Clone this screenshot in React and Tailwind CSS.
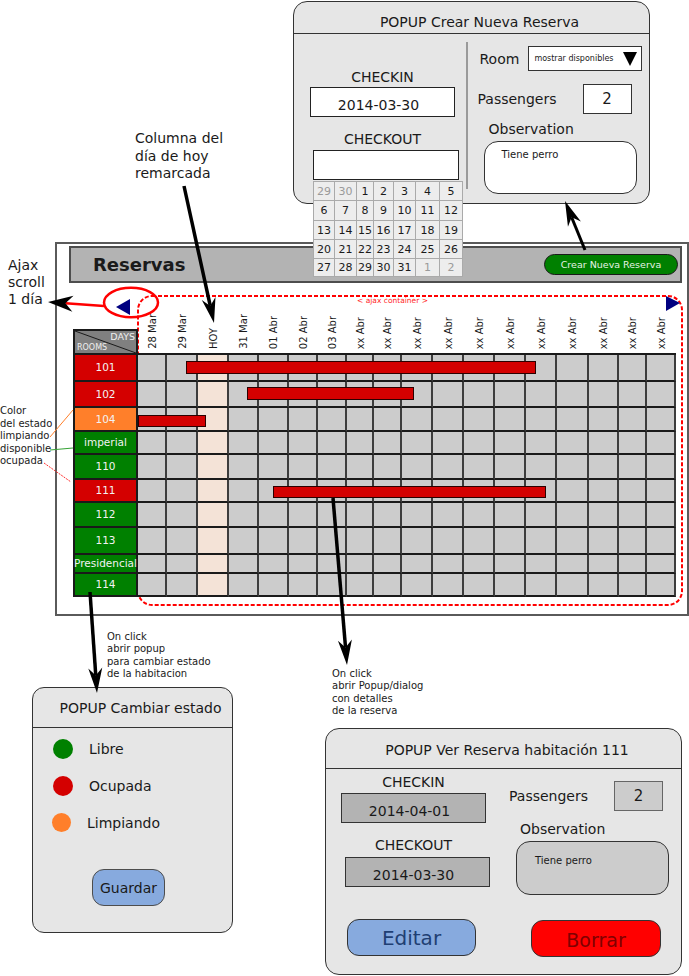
import React from 'react';

const DAYS = ['28 Mar', '29 Mar', 'HOY', '31 Mar', '01 Abr', '02 Abr', '03 Abr', 'xx Abr', 'xx Abr', 'xx Abr', 'xx Abr', 'xx Abr', 'xx Abr', 'xx Abr', 'xx Abr', 'xx Abr', 'xx Abr', 'xx Abr'];

const ROOMS = [
    { name: '101', bg: 'bg-[#d40000]' },
    { name: '102', bg: 'bg-[#d40000]' },
    { name: '104', bg: 'bg-[#ff7f2a]' },
    { name: 'imperial', bg: 'bg-[#008000]' },
    { name: '110', bg: 'bg-[#008000]' },
    { name: '111', bg: 'bg-[#d40000]' },
    { name: '112', bg: 'bg-[#008000]' },
    { name: '113', bg: 'bg-[#008000]' },
    { name: 'Presidencial', bg: 'bg-[#008000]' },
    { name: '114', bg: 'bg-[#008000]' },
];

// Calendar of the checkout picker, [day, greyed out]
const WEEKS = [
    [[29, 1], [30, 1], [1], [2], [3], [4], [5]],
    [[6], [7], [8], [9], [10], [11], [12]],
    [[13], [14], [15], [16], [17], [18], [19]],
    [[20], [21], [22], [23], [24], [25], [26]],
    [[27], [28], [29], [30], [31], [1, 1], [2, 1]],
];

function Arrow({ x1, y1, x2, y2, color = '#000', head = '#000', w = 3.5, L = 25, W = 7 }) {
    const dx = x2 - x1;
    const dy = y2 - y1;
    const len = Math.hypot(dx, dy);
    const ux = dx / len;
    const uy = dy / len;
    const nx = -uy;
    const ny = ux;
    const bx = x2 - L * ux;
    const by = y2 - L * uy;
    const mx = x2 - 0.7 * L * ux;
    const my = y2 - 0.7 * L * uy;
    const pts = `${x2},${y2} ${bx + W * nx},${by + W * ny} ${mx},${my} ${bx - W * nx},${by - W * ny}`;
    return (
        <g>
            <line x1={x1} y1={y1} x2={mx} y2={my} stroke={color} strokeWidth={w} />
            <polygon points={pts} fill={head} />
        </g>
    );
}

function Triangle() {
    return (
        <svg width="14" height="14" viewBox="0 0 14 14">
            <polygon points="0,0 14,0 7,14" fill="#000" />
        </svg>
    );
}

export default function App() {
    return (
        <div className="relative w-[689px] h-[976px] overflow-hidden bg-white font-['DejaVu_Sans',sans-serif] text-[#1a1a1a]">
            {/* Annotations */}
            <div className="absolute left-[8px] top-[257px] text-[14px] leading-[17px]">
                <p>Ajax</p>
                <p>scroll</p>
                <p>1 día</p>
            </div>
            <div className="absolute left-[135px] top-[130px] text-[14px] leading-[17.5px]">
                <p>Columna del</p>
                <p>día de hoy</p>
                <p>remarcada</p>
            </div>
            <div className="absolute left-0 top-[405px] text-[10px] leading-[12.5px]">
                <p>Color</p>
                <p>del estado</p>
                <p>limpiando</p>
                <p>disponible</p>
                <p>ocupada</p>
            </div>
            <div className="absolute left-[107px] top-[631px] text-[10px] leading-[12.4px]">
                <p>On click</p>
                <p>abrir popup</p>
                <p>para cambiar estado</p>
                <p>de la habitacion</p>
            </div>
            <div className="absolute left-[332px] top-[668px] text-[10px] leading-[12.4px]">
                <p>On click</p>
                <p>abrir Popup/dialog</p>
                <p>con detalles</p>
                <p>de la reserva</p>
            </div>

            {/* Main page frame */}
            <div className="absolute left-[55px] top-[242px] w-[634px] h-[374px] border-2 border-[#5a5a5a] bg-white">
                <svg className="absolute left-[80px] top-[51px]" width="546" height="312">
                    <rect x="1" y="1" width="544" height="309" rx="14" fill="none" stroke="#ff0000" strokeWidth="2" strokeDasharray="4 2" />
                </svg>
                <span className="absolute left-[300px] top-[53px] text-[7.5px] leading-none text-[#ff2a2a]">&lt; ajax container &gt;</span>

                <div className="relative ml-[12px] mt-[2px] w-[613px] h-[37px] bg-[#b3b3b3] border-2 border-[#4d4d4d] flex items-center justify-between pl-[22px] pr-[2px]">
                    <span className="text-[18px] font-bold leading-none">Reservas</span>
                    <button className="w-[134px] h-[21px] rounded-full bg-[#008000] border border-[#1a1a1a] text-[9.5px] text-[#e6f2e6] leading-none">
                        Crear Nueva Reserva
                    </button>
                </div>

                <div className="relative ml-[16px] mt-[22px] w-[605px] grid grid-cols-[65px_29px_31px_31px_30px_30px_29px_29px_27px_28px_31px_31px_31px_31px_31px_32px_30px_28px_29px] grid-rows-[50px_27px_26px_24px_23px_25px_23px_25px_27px_19px_23px]">
                    <div className="self-end relative h-[26px] bg-[#808080] border-2 border-[#1a1a1a]">
                        <svg className="absolute inset-0 w-full h-full" viewBox="0 0 100 100" preserveAspectRatio="none">
                            <line x1="0" y1="0" x2="100" y2="100" stroke="#1a1a1a" strokeWidth="1" vectorEffect="non-scaling-stroke" />
                        </svg>
                        <span className="absolute top-[1px] right-[1px] text-[9.5px] leading-none text-[#eeeeee]">DAYS</span>
                        <span className="absolute bottom-[1px] left-[2px] text-[8px] leading-none text-[#eeeeee]">ROOMS</span>
                    </div>
                    {DAYS.map((d, i) => (
                        <div key={i} className="flex items-end justify-center pb-[4px] border-b-2 border-[#1a1a1a]">
                            <span className="[writing-mode:vertical-rl] rotate-180 text-[10px] leading-none whitespace-nowrap">{d}</span>
                        </div>
                    ))}
                    {ROOMS.map((room) => (
                        <React.Fragment key={room.name}>
                            <div className={`${room.bg} flex items-center justify-center border-l-2 border-r-2 border-b-2 border-[#1a1a1a] text-[10.5px] leading-none text-[#f2f2f2]`}>
                                {room.name}
                            </div>
                            {DAYS.map((d, i) => (
                                <div
                                    key={i}
                                    className={`${i === 2 ? 'bg-[#f4e3d7]' : 'bg-[#cccccc]'} border-r-2 border-b-2 border-r-[#3c3c3c] border-b-[#1a1a1a]`}
                                />
                            ))}
                        </React.Fragment>
                    ))}

                    {/* Reservations */}
                    <div className="absolute left-[113px] top-[56px] w-[350px] h-[13px] bg-[#d40000] border border-[#2b0000]" />
                    <div className="absolute left-[174px] top-[82px] w-[167px] h-[13px] bg-[#d40000] border border-[#2b0000]" />
                    <div className="absolute left-[65px] top-[110px] w-[68px] h-[12px] bg-[#d40000] border border-[#2b0000]" />
                    <div className="absolute left-[200px] top-[181px] w-[273px] h-[12px] bg-[#d40000] border border-[#2b0000]" />
                </div>
            </div>

            {/* POPUP Crear Nueva Reserva */}
            <div className="absolute left-[293px] top-[1px] w-[357px] h-[203px] rounded-[14px] border-[1.5px] border-[#333] bg-[#e6e6e6] overflow-hidden">
                <div className="h-[32px] border-b-[1.5px] border-[#333] flex justify-center pt-[12px] pl-[16px] text-[14px] leading-[16px]">
                    POPUP Crear Nueva Reserva
                </div>
                <div className="flex">
                    <div className="w-[172px] pl-[16px] pt-[35px] flex flex-col items-start">
                        <div className="w-[145px] text-center text-[14px] leading-[16px]">CHECKIN</div>
                        <div className="mt-[2px] w-[145px] h-[30px] border-[1.5px] border-[#222] bg-white flex justify-center pt-[9px] pr-[8px] text-[14px] leading-[16px]">
                            2014-03-30
                        </div>
                        <div className="mt-[14px] w-[145px] text-center text-[14px] leading-[16px]">CHECKOUT</div>
                        <div className="mt-[3px] ml-[3px] w-[146px] h-[30px] border-[1.5px] border-[#222] bg-white" />
                    </div>
                    <div className="mt-[8px] w-[1.5px] h-[147px] bg-[#9a9a9a]" />
                    <div className="pl-[11px] flex flex-col">
                        <div className="mt-[12px] h-[25px] flex items-center">
                            <span className="text-[14px] leading-[16px] ml-[1px]">Room</span>
                            <div className="ml-[9px] w-[114px] h-[25px] border-[1.5px] border-[#333] bg-white flex items-center justify-between pl-[5px] pr-[4px]">
                                <span className="text-[8px] leading-none">mostrar disponibles</span>
                                <Triangle />
                            </div>
                        </div>
                        <div className="mt-[13px] h-[30px] flex items-center">
                            <span className="text-[14px] leading-[16px] -ml-[1px]">Passengers</span>
                            <div className="ml-[26px] w-[49px] h-[30px] border-[1.5px] border-[#333] bg-white flex items-center justify-center text-[15px] leading-none">
                                2
                            </div>
                        </div>
                        <span className="mt-[7px] ml-[10px] text-[14px] leading-[16px]">Observation</span>
                        <div className="mt-[4px] ml-[5px] w-[153px] h-[53px] rounded-[14px] border-[1.5px] border-[#333] bg-white pl-[17px] pt-[7px] text-[10px] leading-[12px]">
                            Tiene perro
                        </div>
                    </div>
                </div>
            </div>

            {/* Date picker */}
            <div className="absolute left-[313px] top-[181px] grid grid-cols-[21px_22px_17px_20px_22px_24px_23px] grid-rows-[19px_20px_19px_19px_18px] bg-[#ededed] border-l border-t border-[#aaaaaa]">
                {WEEKS.flat().map(([day, grey], i) => (
                    <div
                        key={i}
                        className={`flex items-center justify-center border-r border-b border-[#aaaaaa] text-[11px] leading-none ${grey ? 'text-[#9a9a9a]' : 'text-[#1a1a1a]'}`}
                    >
                        {day}
                    </div>
                ))}
            </div>

            {/* POPUP Cambiar estado */}
            <div className="absolute left-[32px] top-[687px] w-[201px] h-[246px] rounded-[12px] border-[1.5px] border-[#333] bg-[#e6e6e6] overflow-hidden">
                <div className="h-[40px] border-b-[1.5px] border-[#333] flex justify-center pt-[12px] pl-[16px] text-[14px] leading-[16px]">
                    POPUP Cambiar estado
                </div>
                <div className="pl-[20px] pt-[11px] flex flex-col gap-[17px]">
                    <div className="flex items-center gap-[16px]">
                        <span className="w-[20px] h-[20px] rounded-full bg-[#008000]" />
                        <span className="text-[14px] leading-[16px]">Libre</span>
                    </div>
                    <div className="flex items-center gap-[16px]">
                        <span className="w-[20px] h-[20px] rounded-full bg-[#d40000]" />
                        <span className="text-[14px] leading-[16px]">Ocupada</span>
                    </div>
                    <div className="flex items-center gap-[16px]">
                        <span className="-ml-[1px] w-[19px] h-[19px] rounded-full bg-[#ff7f2a]" />
                        <span className="text-[14px] leading-[16px]">Limpiando</span>
                    </div>
                </div>
                <button className="mt-[37px] ml-[59px] w-[73px] h-[37px] rounded-[12px] bg-[#87aade] border-[1.5px] border-[#4d4d4d] text-[14px] leading-none">
                    Guardar
                </button>
            </div>

            {/* POPUP Ver Reserva */}
            <div className="absolute left-[325px] top-[728px] w-[357px] h-[247px] rounded-[14px] border-[1.5px] border-[#333] bg-[#e6e6e6] overflow-hidden">
                <div className="h-[40px] border-b-[1.5px] border-[#333] flex justify-center pt-[13px] pl-[7px] text-[14px] leading-[16px]">
                    POPUP Ver Reserva habitación 111
                </div>
                <div className="flex">
                    <div className="w-[183px] pl-[15px] pt-[5px] flex flex-col items-start">
                        <div className="w-[145px] text-center text-[14px] leading-[16px]">CHECKIN</div>
                        <div className="mt-[3px] w-[145px] h-[30px] border-[1.5px] border-[#333] bg-[#b3b3b3] flex justify-center pt-[9px] pr-[8px] text-[14px] leading-[16px]">
                            2014-04-01
                        </div>
                        <div className="mt-[14px] w-[145px] text-center text-[14px] leading-[16px]">CHECKOUT</div>
                        <div className="mt-[4px] ml-[4px] w-[145px] h-[30px] border-[1.5px] border-[#333] bg-[#b3b3b3] flex justify-center pt-[9px] pr-[8px] text-[14px] leading-[16px]">
                            2014-03-30
                        </div>
                    </div>
                    <div className="flex flex-col">
                        <div className="mt-[12px] h-[30px] flex items-center">
                            <span className="text-[14px] leading-[16px]">Passengers</span>
                            <div className="ml-[26px] w-[49px] h-[30px] border-[1.5px] border-[#666] bg-[#cccccc] flex items-center justify-center text-[15px] leading-none">
                                2
                            </div>
                        </div>
                        <span className="mt-[10px] ml-[11px] text-[14px] leading-[16px]">Observation</span>
                        <div className="mt-[4px] ml-[7px] w-[153px] h-[54px] rounded-[14px] border-[1.5px] border-[#333] bg-[#cccccc] pl-[18px] pt-[13px] text-[10px] leading-[12px]">
                            Tiene perro
                        </div>
                    </div>
                </div>
                <div className="mt-[24px] pl-[21px] flex items-start">
                    <button className="w-[129px] h-[37px] rounded-[12px] bg-[#87aade] border-[1.5px] border-[#333] text-[20px] leading-none text-[#1f3f73]">
                        Editar
                    </button>
                    <button className="mt-[1px] ml-[55px] w-[130px] h-[37px] rounded-[12px] bg-[#ff0000] border-[1.5px] border-[#333] text-[19px] leading-none text-[#800000] pt-[3px]">
                        Borrar
                    </button>
                </div>
            </div>

            {/* Drawing layer: arrows, callouts, scroll arrows */}
            <svg className="absolute inset-0 pointer-events-none" width="689" height="976">
                <polygon points="116,307 130,299 130,315" fill="#000080" />
                <polygon points="666,296 666,311 680,303" fill="#000080" />
                <ellipse cx="131" cy="302.5" rx="27" ry="14.8" fill="none" stroke="#ff0000" strokeWidth="2.5" />
                <Arrow x1={104} y1={306} x2={48} y2={302} color="#ff0000" w={2.5} W={8} />
                <line x1="50" y1="437" x2="73" y2="410" stroke="#ff7f2a" strokeWidth="1" />
                <line x1="50" y1="450" x2="73" y2="448" stroke="#37a337" strokeWidth="1.2" />
                <line x1="44" y1="463" x2="71" y2="482" stroke="#ff3030" strokeWidth="1" strokeDasharray="2 1" />
                <Arrow x1={184} y1={186} x2={214} y2={323} />
                <Arrow x1={585} y1={250} x2={565} y2={201} w={3} />
                <Arrow x1={90} y1={592} x2={97} y2={693} />
                <Arrow x1={333} y1={498} x2={347} y2={665} />
            </svg>
        </div>
    );
}
